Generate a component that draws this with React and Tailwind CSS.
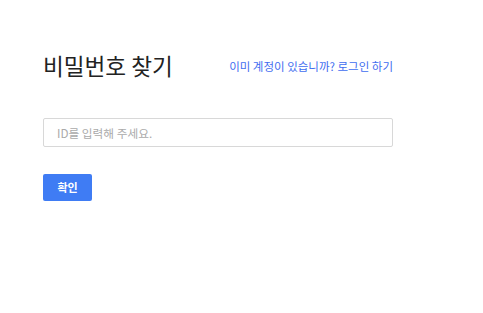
export default function App() {
  return (
    <div className="w-[483px] h-[313px] bg-white pl-[43px] pt-[48px]" style={{ fontFamily: '"Noto Sans CJK KR", "Noto Sans", sans-serif' }}>
      <div className="flex items-center w-[350px] justify-between h-[36px]">
        <h1 className="text-[22.6px] leading-[36px] text-[#222] font-normal">비밀번호 찾기</h1>
        <a className="text-[11.5px] text-[#3f6df0] mt-[1px]">이미 계정이 있습니까? 로그인 하기</a>
      </div>
      <div className="mt-[34px] w-[350px] h-[29px] border border-[#d8d8d8] rounded-[2px] flex items-center pl-[13px]">
        <span className="text-[11.7px] text-[#aaaaaa]">ID를 입력해 주세요.</span>
      </div>
      <button className="mt-[27px] w-[49px] h-[27px] bg-[#3f7cf4] rounded-[2px] text-white text-[11px] font-bold flex items-center justify-center">확인</button>
    </div>
  );
}
